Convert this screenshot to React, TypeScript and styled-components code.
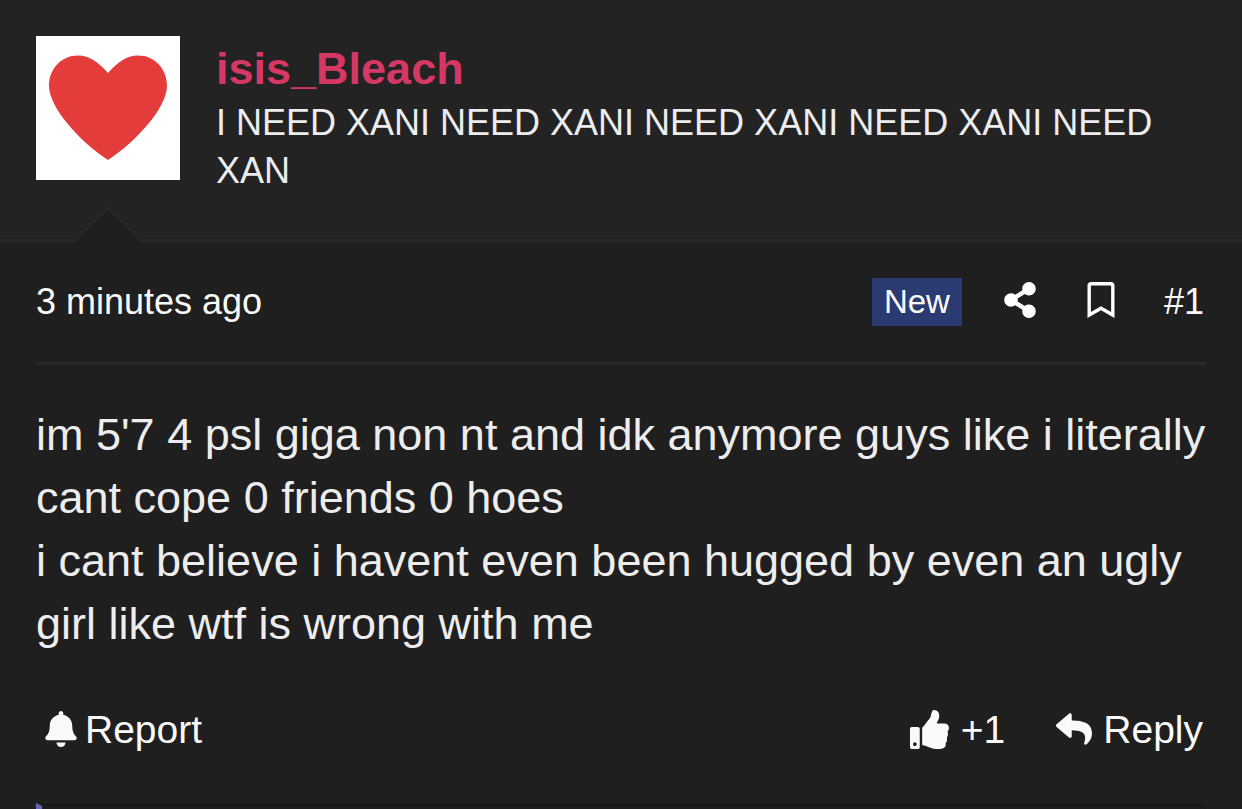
import React from "react";
import styled, { createGlobalStyle } from "styled-components";
import { FaBell, FaRegBookmark, FaReply, FaShareAlt, FaThumbsUp } from "react-icons/fa";

const GlobalStyle = createGlobalStyle`
  * { box-sizing: border-box; }
  body {
    margin: 0;
    background: #1f1f1f;
    color: #fafafa;
    font-family: "Liberation Sans", Arial, Helvetica, sans-serif;
    font-size: 36px;
    line-height: 48px;
  }
`;

const Post = styled.article`
  display: flex;
  flex-direction: column;
  min-height: 100vh;
`;

const UserBar = styled.header`
  position: relative;
  display: flex;
  gap: 36px;
  padding: 36px 36px 44px;
  background: #232323;
  border-bottom: 3px solid #282828;

  &::before,
  &::after {
    content: "";
    position: absolute;
    left: 73px;
    bottom: -3px;
    border: solid transparent;
    border-width: 0 35px 36px;
    border-bottom-color: #282828;
  }
  &::after {
    bottom: -6px;
    border-bottom-color: #1f1f1f;
  }
`;

const Avatar = styled.a`
  flex: none;
  display: block;
  width: 144px;
  height: 144px;
  background: #fff;

  svg { display: block; }
`;

const UserText = styled.div`
  padding-top: 3px;
`;

const UserName = styled.a`
  display: block;
  color: #d63864;
  font-size: 45px;
  font-weight: 700;
  line-height: 60px;
  text-decoration: none;
`;

const UserTitle = styled.div`
  color: #ededed;
`;

const Main = styled.div`
  flex: 1;
  display: flex;
  flex-direction: column;
  padding: 36px 36px 0;
`;

const Row = styled.div<{ $ruled?: boolean }>`
  display: flex;
  justify-content: space-between;
  align-items: center;
  ${(p) => p.$ruled && "padding-bottom: 36px; border-bottom: 3px solid #282828;"}
`;

const Attributes = styled.div`
  display: flex;
  align-items: center;
  gap: 36px;
`;

const MetaLink = styled.a`
  color: #fafafa;
  text-decoration: none;
`;

const PostNumber = styled(MetaLink)`
  padding: 0 2px 0 4px;
`;

const Badge = styled.span`
  padding: 0 12px;
  background: #2c3a72;
  font-size: 33px;
`;

const IconButton = styled.button`
  display: flex;
  justify-content: center;
  width: 45px;
  padding: 0 0 4px;
  border: 0;
  background: none;
  color: #fff;
  font-size: 36px;
  cursor: pointer;
`;

const Message = styled.p`
  margin: 0;
  padding: 38px 0 48px;
  color: #ededed;
  font-size: 45px;
  line-height: 63px;
`;

const Actions = styled.div`
  display: flex;
  gap: 51px;
  padding-right: 3px;
`;

const Action = styled.button<{ $icon: number; $gap: number }>`
  display: flex;
  align-items: center;
  gap: ${(p) => p.$gap}px;
  padding: 0;
  border: 0;
  background: none;
  color: #fafafa;
  font: inherit;
  font-size: 39px;
  line-height: 54px;
  cursor: pointer;

  svg {
    margin-bottom: 2px;
    font-size: ${(p) => p.$icon}px;
  }
`;

const ReportSlot = styled.div`
  padding-left: 7px;
`;

const Reactions = styled.div`
  flex: 1;
  min-height: 6px;
  margin-top: 46px;
  border: 3px solid #1a1a1a;
  border-bottom: 0;
  border-left: 6px solid #6468bb;
`;

const Heart = () => (
  <svg width="144" height="144" viewBox="0 0 144 144" aria-hidden="true">
    <path
      fill="#e43b3b"
      d="M72 37C62 26 54 19.500 42 19.500C25 19.500 13 33 13 50C13 71 43 105 72 124C101 105 131 71 131 50C131 33 119 19.500 102 19.500C90 19.500 82 26 72 37Z"
    />
  </svg>
);

export default function App() {
  return (
    <>
      <GlobalStyle />
      <Post>
        <UserBar>
          <Avatar href="#member" aria-label="isis_Bleach"><Heart /></Avatar>
          <UserText>
            <UserName href="#member">isis_Bleach</UserName>
            <UserTitle>I NEED XANI NEED XANI NEED XANI NEED XANI NEED XAN</UserTitle>
          </UserText>
        </UserBar>
        <Main>
          <Row $ruled>
            <MetaLink href="#post-1"><time>3 minutes ago</time></MetaLink>
            <Attributes>
              <Badge>New</Badge>
              <IconButton type="button" aria-label="Share"><FaShareAlt /></IconButton>
              <IconButton type="button" aria-label="Bookmark"><FaRegBookmark /></IconButton>
              <PostNumber href="#post-1">#1</PostNumber>
            </Attributes>
          </Row>
          <Message>
            im 5'7 4 psl giga non nt and idk anymore guys like i literally cant cope 0 friends 0 hoes
            <br />
            i cant believe i havent even been hugged by even an ugly girl like wtf is wrong with me
          </Message>
          <Row>
            <ReportSlot>
              <Action type="button" $icon={36} $gap={6}><FaBell />Report</Action>
            </ReportSlot>
            <Actions>
              <Action type="button" $icon={39} $gap={12}><FaThumbsUp />+1</Action>
              <Action type="button" $icon={36} $gap={11}><FaReply />Reply</Action>
            </Actions>
          </Row>
          <Reactions />
        </Main>
      </Post>
    </>
  );
}
